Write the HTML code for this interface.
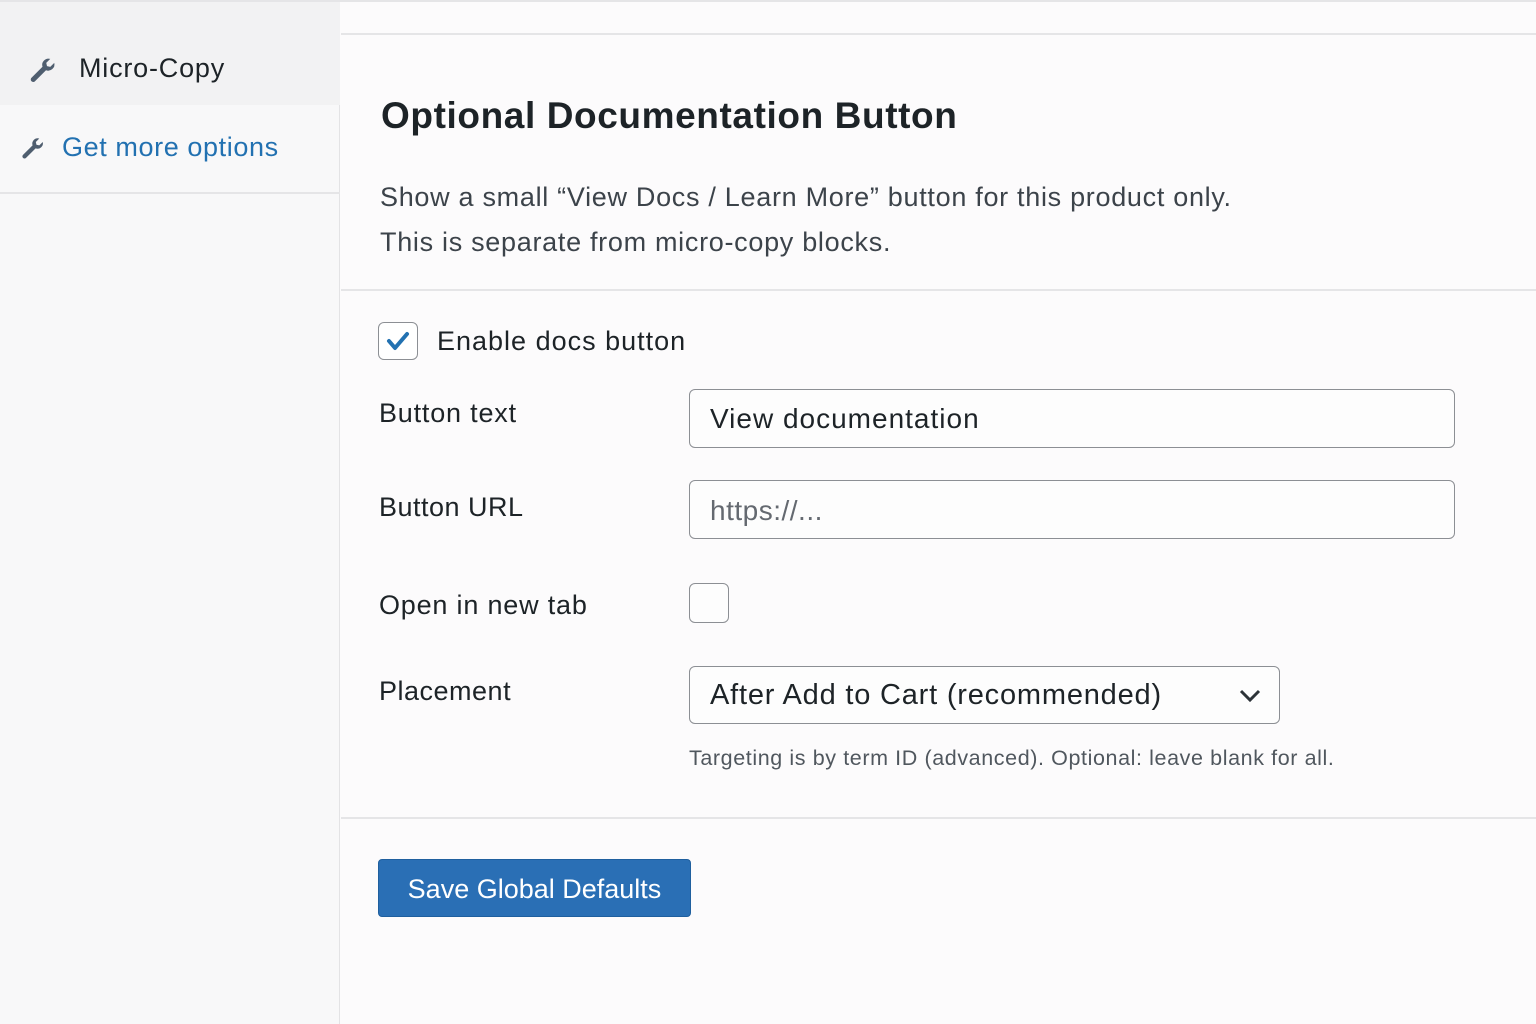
<!DOCTYPE html>
<html><head><meta charset="utf-8"><style>
*{box-sizing:border-box;margin:0;padding:0}
body{width:1536px;height:1024px;overflow:hidden;background:#fcfbfc;font-family:"Liberation Sans",sans-serif;color:#1e1e1e;position:relative}
.a{position:absolute;white-space:nowrap}
.inp{position:absolute;border:1.5px solid #8c8f94;border-radius:6px;background:#fdfdfd}
</style></head><body>
<div class="a" style="left:0;top:0;width:340px;height:1024px;background:#f8f8f9;border-right:1.5px solid #e3e3e5"></div>
<div class="a" style="left:0;top:0;width:340px;height:105px;background:#f2f2f3"></div>
<div class="a" style="left:0;top:192px;width:340px;height:2px;background:#e5e5e7"></div>
<div class="a" style="left:341px;top:33px;width:1195px;height:1.5px;background:#e5e5e7"></div>
<div class="a" style="left:0;top:0;width:1536px;height:1.5px;background:#e5e5e7"></div>
<svg class="a" style="left:28px;top:56px" width="30" height="30" viewBox="0 0 24 24"><path d="M21 5.5l-3.2 3.2-2.6-.6-.6-2.6L17.8 2.3A5 5 0 0 0 11.6 8.6L3 17.2a2 2 0 1 0 2.8 2.8l8.6-8.6a5 5 0 0 0 6.6-5.9z" fill="#4f5e6f"/></svg>
<div class="a" style="left:79px;top:53px;font-size:27px;color:#1d2327;letter-spacing:0.8px">Micro-Copy</div>
<svg class="a" style="left:20px;top:136px" width="26" height="26" viewBox="0 0 24 24"><path d="M21 5.5l-3.2 3.2-2.6-.6-.6-2.6L17.8 2.3A5 5 0 0 0 11.6 8.6L3 17.2a2 2 0 1 0 2.8 2.8l8.6-8.6a5 5 0 0 0 6.6-5.9z" fill="#4f5e6f"/></svg>
<div class="a" style="left:62px;top:132px;font-size:27px;color:#2271b1;letter-spacing:0.6px">Get more options</div>

<div class="a" style="left:381px;top:95px;font-size:37px;font-weight:bold;color:#1d2327;letter-spacing:0.6px">Optional Documentation Button</div>
<div class="a" style="left:380px;top:175px;font-size:27px;color:#3c434a;line-height:45px;letter-spacing:0.7px">Show a small “View Docs / Learn More” button for this product only.<br>This is separate from micro-copy blocks.</div>
<div class="a" style="left:341px;top:289px;width:1195px;height:1.5px;background:#e5e5e7"></div>

<div class="a" style="left:378px;top:322px;width:40px;height:38px;border:1.5px solid #8c8f94;border-radius:6px;background:#fff"></div>
<svg class="a" style="left:384px;top:327px" width="28" height="28" viewBox="0 0 28 28"><path d="M5 14l6 7 12-14" fill="none" stroke="#2271b1" stroke-width="4" stroke-linecap="round" stroke-linejoin="round"/></svg>
<div class="a" style="left:437px;top:326px;font-size:27px;color:#1d2327;letter-spacing:1px">Enable docs button</div>

<div class="a" style="left:379px;top:398px;font-size:27px;color:#1d2327;letter-spacing:0.8px">Button text</div>
<div class="inp" style="left:689px;top:389px;width:766px;height:59px"></div>
<div class="a" style="left:710px;top:403px;font-size:28px;color:#1d2327;letter-spacing:1px">View documentation</div>

<div class="a" style="left:379px;top:492px;font-size:27px;color:#1d2327;letter-spacing:0.5px">Button URL</div>
<div class="inp" style="left:689px;top:480px;width:766px;height:59px"></div>
<div class="a" style="left:710px;top:495px;font-size:28px;color:#646970;letter-spacing:0.5px">https://...</div>

<div class="a" style="left:379px;top:590px;font-size:27px;color:#1d2327;letter-spacing:0.8px">Open in new tab</div>
<div class="inp" style="left:689px;top:583px;width:40px;height:40px"></div>

<div class="a" style="left:379px;top:676px;font-size:27px;color:#1d2327;letter-spacing:0.5px">Placement</div>
<div class="inp" style="left:689px;top:666px;width:591px;height:58px"></div>
<div class="a" style="left:710px;top:679px;font-size:29px;color:#1d2327;letter-spacing:0.8px">After Add to Cart (recommended)</div>
<svg class="a" style="left:1237px;top:685px" width="26" height="20" viewBox="0 0 26 20"><path d="M4 6l9 9 9-9" fill="none" stroke="#2c3338" stroke-width="3"/></svg>
<div class="a" style="left:689px;top:746px;font-size:21.5px;color:#50575e;letter-spacing:0.6px">Targeting is by term ID (advanced). Optional: leave blank for all.</div>

<div class="a" style="left:341px;top:817px;width:1195px;height:1.5px;background:#e5e5e7"></div>
<div class="a" style="left:378px;top:859px;width:313px;height:58px;background:#2a6fb5;border:1px solid #1f5f9e;border-radius:4px"></div>
<div class="a" style="left:378px;top:874px;width:313px;text-align:center;font-size:27px;color:#fff">Save Global Defaults</div>
</body></html>
